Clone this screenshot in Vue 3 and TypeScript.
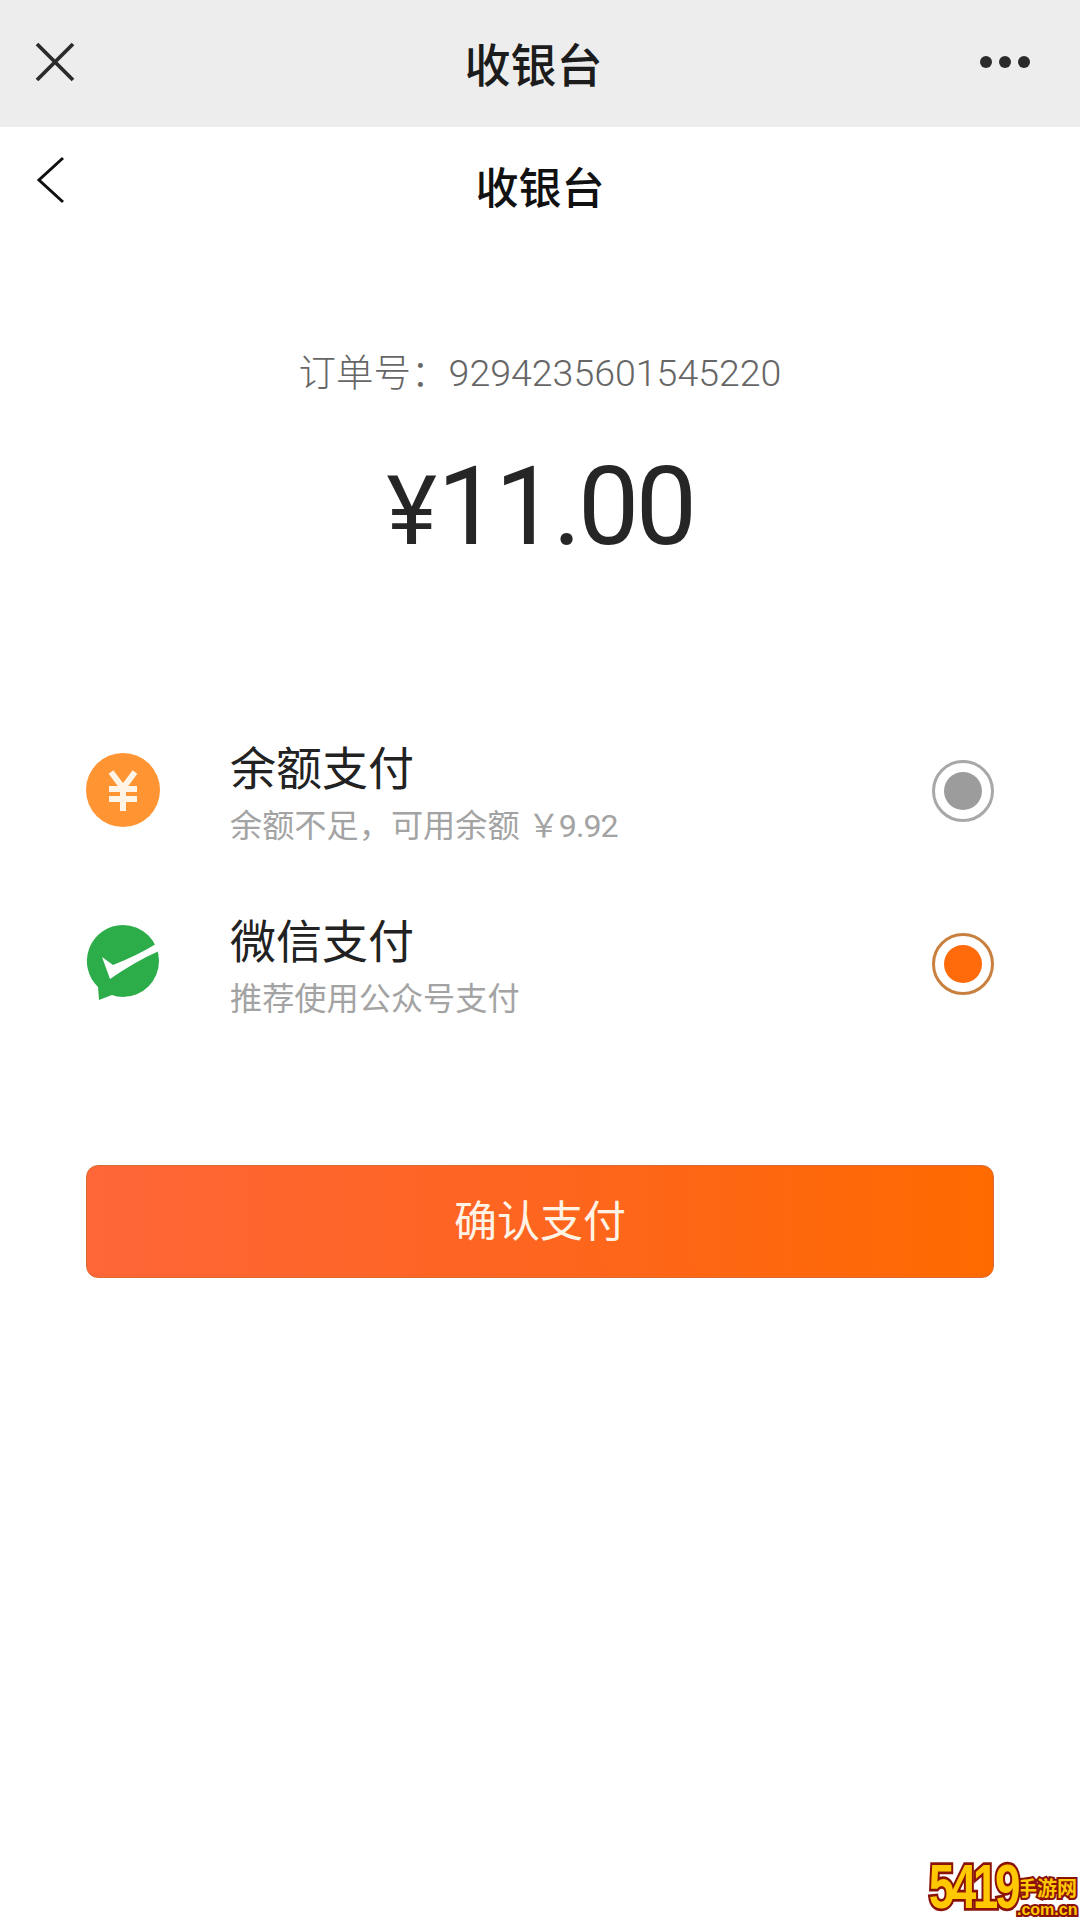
<template>
  <div class="page">
    <header class="wx-bar">
      <svg class="wx-bar__close" width="40" height="40" viewBox="0 0 40 40">
        <path d="M2 2 L38 38 M38 2 L2 38" fill="none" stroke="#2b2b2b" stroke-width="3.8" />
      </svg>
      <span class="wx-bar__title">收银台</span>
      <span class="wx-bar__more"><i></i><i></i><i></i></span>
    </header>

    <div class="sub-bar">
      <svg class="sub-bar__back" width="30" height="48" viewBox="0 0 30 48">
        <path d="M27 2 L3 24 L27 46" fill="none" stroke="#111" stroke-width="3" />
      </svg>
      <span class="sub-bar__title">收银台</span>
    </div>

    <section class="order">
      <p class="order__no">订单号：{{ orderNo }}</p>
      <p class="order__amount"><span class="order__yen">¥</span>11.00</p>
    </section>

    <section class="methods">
      <div v-for="m in methods" :key="m.id" class="method">
        <span class="method__icon">
          <svg v-if="m.id === 'balance'" width="74" height="74" viewBox="0 0 74 74">
            <circle cx="37" cy="37" r="37" fill="#ff9433" />
            <path
              d="M25 19 L37 35 L49 19 M23 36 H51 M23 46 H51 M37 35 V58"
              fill="none"
              stroke="#fff4e6"
              stroke-width="6"
            />
          </svg>
          <svg v-else width="74" height="76" viewBox="0 0 74 76">
            <path
              d="M37 0 A36 36 0 0 1 37 72 C33 72 29 71 26 70 L13 75 L12 62 A36 36 0 0 1 37 0 Z"
              fill="#2dad4a"
            />
            <path
              d="M16 32 L27 40 Q50 31 70 19 Q73 24 73 26 Q50 36 24 54 Z"
              fill="#fff"
            />
          </svg>
        </span>
        <div class="method__text">
          <div class="method__name">{{ m.name }}</div>
          <div class="method__desc">{{ m.desc }}<span v-if="m.price" class="method__price">{{ m.price }}</span></div>
        </div>
        <span class="radio" :class="`radio--${m.id}`"><i></i></span>
      </div>
    </section>

    <button class="pay-btn" type="button">确认支付</button>

    <div class="mark">
      <span class="mark__num">5419</span>
      <span class="mark__side">
        <span class="mark__cn">手游网</span>
        <span class="mark__com">.com.cn</span>
      </span>
    </div>
  </div>
</template>

<script setup lang="ts">
interface PayMethod {
  id: 'balance' | 'wechat';
  name: string;
  desc: string;
  price?: string;
}

const orderNo = '9294235601545220';

const methods: PayMethod[] = [
  { id: 'balance', name: '余额支付', desc: '余额不足，可用余额 ', price: '￥9.92' },
  { id: 'wechat', name: '微信支付', desc: '推荐使用公众号支付' },
];
</script>

<style>
html,
body {
  background: #fff;
}
</style>

<style scoped>
.page {
  position: relative;
  width: 1080px;
  height: 1920px;
  overflow: hidden;
  background: #fff;
  font-family: Roboto, "Noto Sans CJK SC", sans-serif;
}

.wx-bar {
  height: 127px;
  background: #ededed;
  display: flex;
  align-items: center;
  justify-content: space-between;
  padding: 0 50px 4px 35px;
  box-sizing: border-box;
}

.wx-bar__title {
  font-size: 46px;
  font-weight: 500;
  color: #1c1c1c;
  margin-left: 12px;
}

.wx-bar__more {
  display: flex;
  gap: 7px;
}

.wx-bar__more i {
  width: 12px;
  height: 12px;
  border-radius: 50%;
  background: #2b2b2b;
}

.sub-bar {
  height: 120px;
  box-sizing: border-box;
  padding-bottom: 4px;
  position: relative;
  display: flex;
  align-items: center;
  justify-content: center;
}

.sub-bar__back {
  position: absolute;
  left: 36px;
  top: 29px;
}

.sub-bar__title {
  font-size: 43px;
  font-weight: 500;
  color: #111;
}

.order {
  margin-top: 98px;
  text-align: center;
}

.order__no {
  margin: 0;
  font-size: 37.5px;
  line-height: 56px;
  font-weight: 300;
  color: #666;
}

.order__amount {
  margin: 39px 0 0;
  font-size: 109px;
  line-height: 134px;
  letter-spacing: -3.5px;
  color: #262626;
}

.order__yen {
  font-size: 96px;
  margin-right: 4px;
}

.methods {
  margin-top: 147px;
  padding: 0 86px;
  display: flex;
  flex-direction: column;
  gap: 43px;
}

.method {
  display: flex;
  align-items: center;
  height: 130px;
}

.method__icon {
  width: 144px;
  flex: none;
  display: flex;
}

.method__text {
  flex: 1;
  padding-top: 6px;
}

.method__name {
  font-size: 46px;
  line-height: 60px;
  color: #222;
}

.method__desc {
  margin-top: 5px;
  font-size: 32.2px;
  line-height: 44px;
  color: #a3a3a3;
}

.method__price {
  letter-spacing: -1px;
}

.radio {
  width: 62px;
  height: 62px;
  margin-top: 2px;
  box-sizing: border-box;
  border-radius: 50%;
  border: 3px solid #a8a8a8;
  display: flex;
  align-items: center;
  justify-content: center;
}

.radio i {
  width: 38px;
  height: 38px;
  border-radius: 50%;
  background: #9c9c9c;
}

.radio--wechat {
  border-color: #c9803f;
}

.radio--wechat i {
  background: #ff6a0a;
}

.pay-btn {
  display: block;
  margin: 137px 86px 0;
  width: 908px;
  height: 113px;
  border: 1px solid #d96a30;
  border-radius: 12px;
  background: linear-gradient(90deg, #ff6638, #fe651f 50%, #ff6a00);
  color: #fff3e6;
  font-family: inherit;
  font-size: 43px;
  padding: 0 0 7px;
}

.mark {
  position: absolute;
  right: 0;
  bottom: 1px;
  display: flex;
  align-items: flex-end;
  color: #ffc800;
  font-family: "Liberation Sans", "Noto Sans CJK SC", sans-serif;
  font-weight: 700;
  -webkit-text-stroke: 4px #8a1208;
  paint-order: stroke fill;
}

.mark__num {
  flex: none;
  font-size: 46px;
  line-height: 52px;
  letter-spacing: -3.5px;
  transform: scaleY(1.35);
  transform-origin: 50% 85%;
}

.mark__side {
  display: flex;
  flex-direction: column;
  flex: none;
  width: 63px;
}

.mark__cn {
  font-size: 20px;
  line-height: 24px;
}

.mark__com {
  font-size: 16px;
  line-height: 18px;
}
</style>
